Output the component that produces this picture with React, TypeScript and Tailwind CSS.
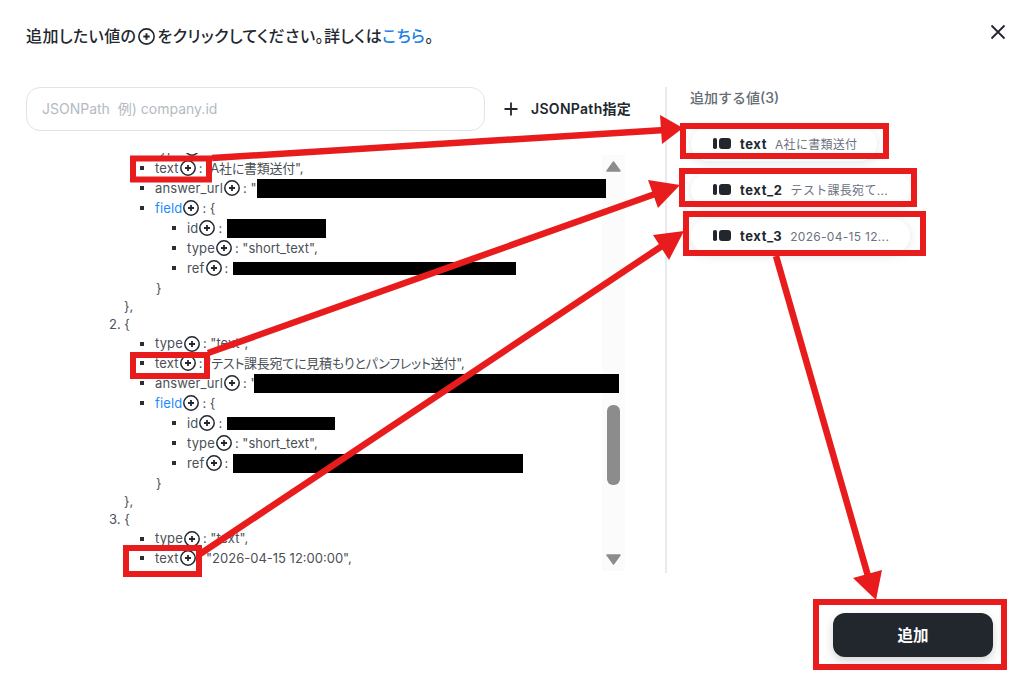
import React from "react";

const FONT = "font-['Inter','Noto_Sans_CJK_JP',sans-serif]";

function PlusCircle({ size = 16 }: { size?: number }) {
  return (
    <svg width={size} height={size} viewBox="0 0 16 16" fill="none" className="shrink-0">
      <circle cx="8" cy="8" r="7.2" stroke="#22272e" strokeWidth="1.5" />
      <path d="M8 5v6M5 8h6" stroke="#22272e" strokeWidth="1.8" />
    </svg>
  );
}

function Redact({ w, h, ml }: { w: number; h: number; ml: number }) {
  return <span className="block bg-black shrink-0" style={{ width: w, height: h, marginLeft: ml }} />;
}

type RowProps = {
  indent: number;
  bullet?: boolean;
  h?: number;
  label?: string;
  blue?: boolean;
  rest?: React.ReactNode;
  children?: React.ReactNode;
};

function Row({ indent, bullet, h = 20, label, blue, rest, children }: RowProps) {
  return (
    <div className="relative flex items-center whitespace-nowrap" style={{ height: h, paddingLeft: indent }}>
      {bullet && <span className="absolute w-[4px] h-[4px] bg-[#2a2f36]" style={{ left: indent - 15 }} />}
      {label && (
        <>
          <span className={blue ? "text-[#1a8cff] tracking-[0.15px]" : "tracking-[0.15px]"}>{label}</span>
          <span className="mx-[1px]">
            <PlusCircle />
          </span>
        </>
      )}
      {rest && <span className={label ? "ml-[2px] [font-feature-settings:'palt']" : "ml-[1px] [font-feature-settings:'palt']"}>{rest}</span>}
      {children}
    </div>
  );
}

function Chip({ w, name, value }: { w: number; name: string; value: string }) {
  return (
    <div
      className="flex items-center h-[34px] rounded-full bg-white pl-[22px] shadow-[0_2px_12px_rgba(0,0,0,0.1)] whitespace-nowrap"
      style={{ width: w }}
    >
      <svg width="18" height="11" viewBox="0 0 18 11" className="shrink-0 -mt-[1px]">
        <rect x="0" y="0" width="4" height="11" rx="1.8" fill="#22272e" />
        <rect x="6" y="0" width="12" height="11" rx="3" fill="#22272e" />
      </svg>
      <span className="ml-[9px] pt-[1px] text-[13px] font-bold text-[#22272e] tracking-[0.6px]">{name}</span>
      <span className="ml-[8px] pt-[1px] text-[12px] text-[#6b7280] tracking-[0.3px]">{value}</span>
    </div>
  );
}

function Overlay() {
  const red = "#e81c1c";
  const boxes = [
    [133, 158.5, 76, 21],
    [133, 355, 74, 21],
    [126, 548, 73, 26],
    [683, 126, 203, 30],
    [682, 171, 232, 33],
    [686, 214, 237, 39],
    [816, 602, 188, 65],
  ];
  return (
    <svg width="1015" height="679" viewBox="0 0 1015 679" className="absolute inset-0 z-20 pointer-events-none">
      {boxes.map(([x, y, w, h], i) => (
        <rect key={i} x={x} y={y} width={w} height={h} fill="none" stroke={red} strokeWidth="6" />
      ))}
      <g stroke={red} strokeWidth="6.5" fill="none">
        <path d="M212 158L665 130" />
        <path d="M208 353L655 194" />
        <path d="M200 554L662 246" />
        <path d="M776 256L868 576" />
      </g>
      <g fill={red}>
        <polygon points="660,115 662,144 683,128" />
        <polygon points="648,180 658,208 680,185" />
        <polygon points="653,235 669,260 684,231" />
        <polygon points="853,578 882,570 876,600" />
      </g>
    </svg>
  );
}

export default function App() {
  const tc = "text-[13px] text-[#4b5157] leading-none";
  return (
    <div className={`relative w-[1015px] h-[679px] bg-white overflow-hidden ${FONT}`}>
      <div className="flex items-center justify-between h-[20px] mt-[26px] pl-[26px] pr-[9px]">
        <div className="flex items-center text-[16px] font-medium text-[#22272e] tracking-[0.45px] whitespace-nowrap [font-feature-settings:'palt']">
          <span>追加したい値の</span>
          <span className="mx-[2px]">
            <PlusCircle size={17} />
          </span>
          <span>をクリックしてください。詳しくは</span>
          <span className="text-[#1a7fe8]">こちら</span>
          <span>。</span>
        </div>
        <svg width="16" height="16" viewBox="0 0 16 16" fill="none" className="-mt-[8px]">
          <path d="M1.5 1.5l13 13M14.5 1.5l-13 13" stroke="#22272e" strokeWidth="1.8" />
        </svg>
      </div>

      <div className="flex h-[486px] mt-[41px]">
        <div className="w-[640px] pl-[26px] flex flex-col">
          <div className="flex items-center h-[43px]">
            <div className="flex items-center w-[459px] h-[44px] rounded-[14px] border border-[#dfe4e9] pl-[15px] text-[14px] text-[#b3bac1] whitespace-nowrap">
              JSONPath&nbsp;&nbsp;例) company.id
            </div>
            <svg width="16" height="16" viewBox="0 0 16 16" fill="none" className="ml-[18px] shrink-0">
              <path d="M8 1.5v13M1.5 8h13" stroke="#22272e" strokeWidth="1.8" />
            </svg>
            <span className="ml-[12px] text-[14px] font-semibold text-[#22272e] tracking-[0.3px] whitespace-nowrap">JSONPath指定</span>
          </div>

          <div className="relative flex w-[599px] h-[420px] mt-[23px] overflow-hidden">
            <div className={`relative z-10 w-[576px] shrink-0 -mt-[15px] ${tc}`}>
              <Row indent={129} bullet label="type" />
              <Row indent={129} bullet label="text" rest={<span className="tracking-[-0.25px]">: "A社に書類送付",</span>} />
              <Row indent={129} bullet label="answer_url" rest={<>: "</>}>
                <Redact w={349} h={19} ml={0} />
              </Row>
              <Row indent={129} bullet label="field" blue rest={<>: {"{"}</>} />
              <Row indent={161} bullet label="id" rest={<>:</>}>
                <Redact w={99} h={19} ml={5} />
              </Row>
              <Row indent={161} bullet label="type" rest={<>: "short_text",</>} />
              <Row indent={161} bullet label="ref" rest={<>:</>}>
                <Redact w={283} h={13} ml={5} />
              </Row>
              <Row indent={129} rest={<>{"}"}</>} />
              <Row indent={97} h={17} rest={<>{"},"}</>} />
              <Row indent={82} h={19} rest={<>2. {"{"}</>} />
              <Row indent={129} h={19} bullet label="type" rest={<>: "text",</>} />
              <Row indent={129} bullet label="text" rest={<span className="tracking-[-0.25px]">: "テスト課長宛てに見積もりとパンフレット送付",</span>} />
              <Row indent={129} bullet label="answer_url" rest={<>: "</>}>
                <Redact w={365} h={19} ml={-3} />
              </Row>
              <Row indent={129} bullet label="field" blue rest={<>: {"{"}</>} />
              <Row indent={161} bullet label="id" rest={<>:</>}>
                <Redact w={108} h={13} ml={5} />
              </Row>
              <Row indent={161} bullet label="type" rest={<>: "short_text",</>} />
              <Row indent={161} bullet label="ref" rest={<>:</>}>
                <Redact w={290} h={19} ml={5} />
              </Row>
              <Row indent={129} rest={<>{"}"}</>} />
              <Row indent={97} h={17} rest={<>{"},"}</>} />
              <Row indent={82} h={19} rest={<>3. {"{"}</>} />
              <Row indent={129} h={19} bullet label="type" rest={<>: "text",</>} />
              <Row indent={129} bullet label="text" rest={<>: "2026-04-15 12:00:00",</>} />
            </div>
            <div className="flex flex-col items-center w-[23px] h-[416px] my-[2px] shrink-0 bg-[#fbfbfb]">
              <svg width="15" height="11" viewBox="0 0 15 11" className="mt-[6px] shrink-0">
                <polygon points="7.5,1 14,10 1,10" fill="#8c8c8c" stroke="#8c8c8c" strokeWidth="1.5" strokeLinejoin="round" />
              </svg>
              <div className="w-[13px] h-[80px] rounded-[6px] bg-[#8c8c8c] mt-[233px] shrink-0" />
              <svg width="15" height="11" viewBox="0 0 15 11" className="mt-auto mb-[6px] shrink-0">
                <polygon points="1,1 14,1 7.5,10" fill="#8c8c8c" stroke="#8c8c8c" strokeWidth="1.5" strokeLinejoin="round" />
              </svg>
            </div>
          </div>
        </div>

        <div className="ml-[25px] w-[2px] bg-[#e6ebef] shrink-0" />

        <div className="pl-[23px] flex flex-col">
          <div className="h-[20px] mb-[2px] flex items-center text-[14px] font-medium text-[#646b73] whitespace-nowrap">
            追加する値(3)
          </div>
          <div className="flex flex-col gap-[12px] mt-[18px] ml-[1px]">
            <Chip w={186} name="text" value="A社に書類送付" />
            <Chip w={220} name="text_2" value="テスト課長宛て..." />
            <Chip w={219} name="text_3" value="2026-04-15 12..." />
          </div>
        </div>
      </div>

      <div className="flex justify-end pr-[22px] mt-[40px]">
        <button className="w-[160px] h-[44px] rounded-[12px] bg-[#22272e] text-white text-[15.5px] font-semibold pt-[1px] shadow-[0_4px_10px_rgba(34,39,46,0.2)]">
          追加
        </button>
      </div>

      <Overlay />
    </div>
  );
}
